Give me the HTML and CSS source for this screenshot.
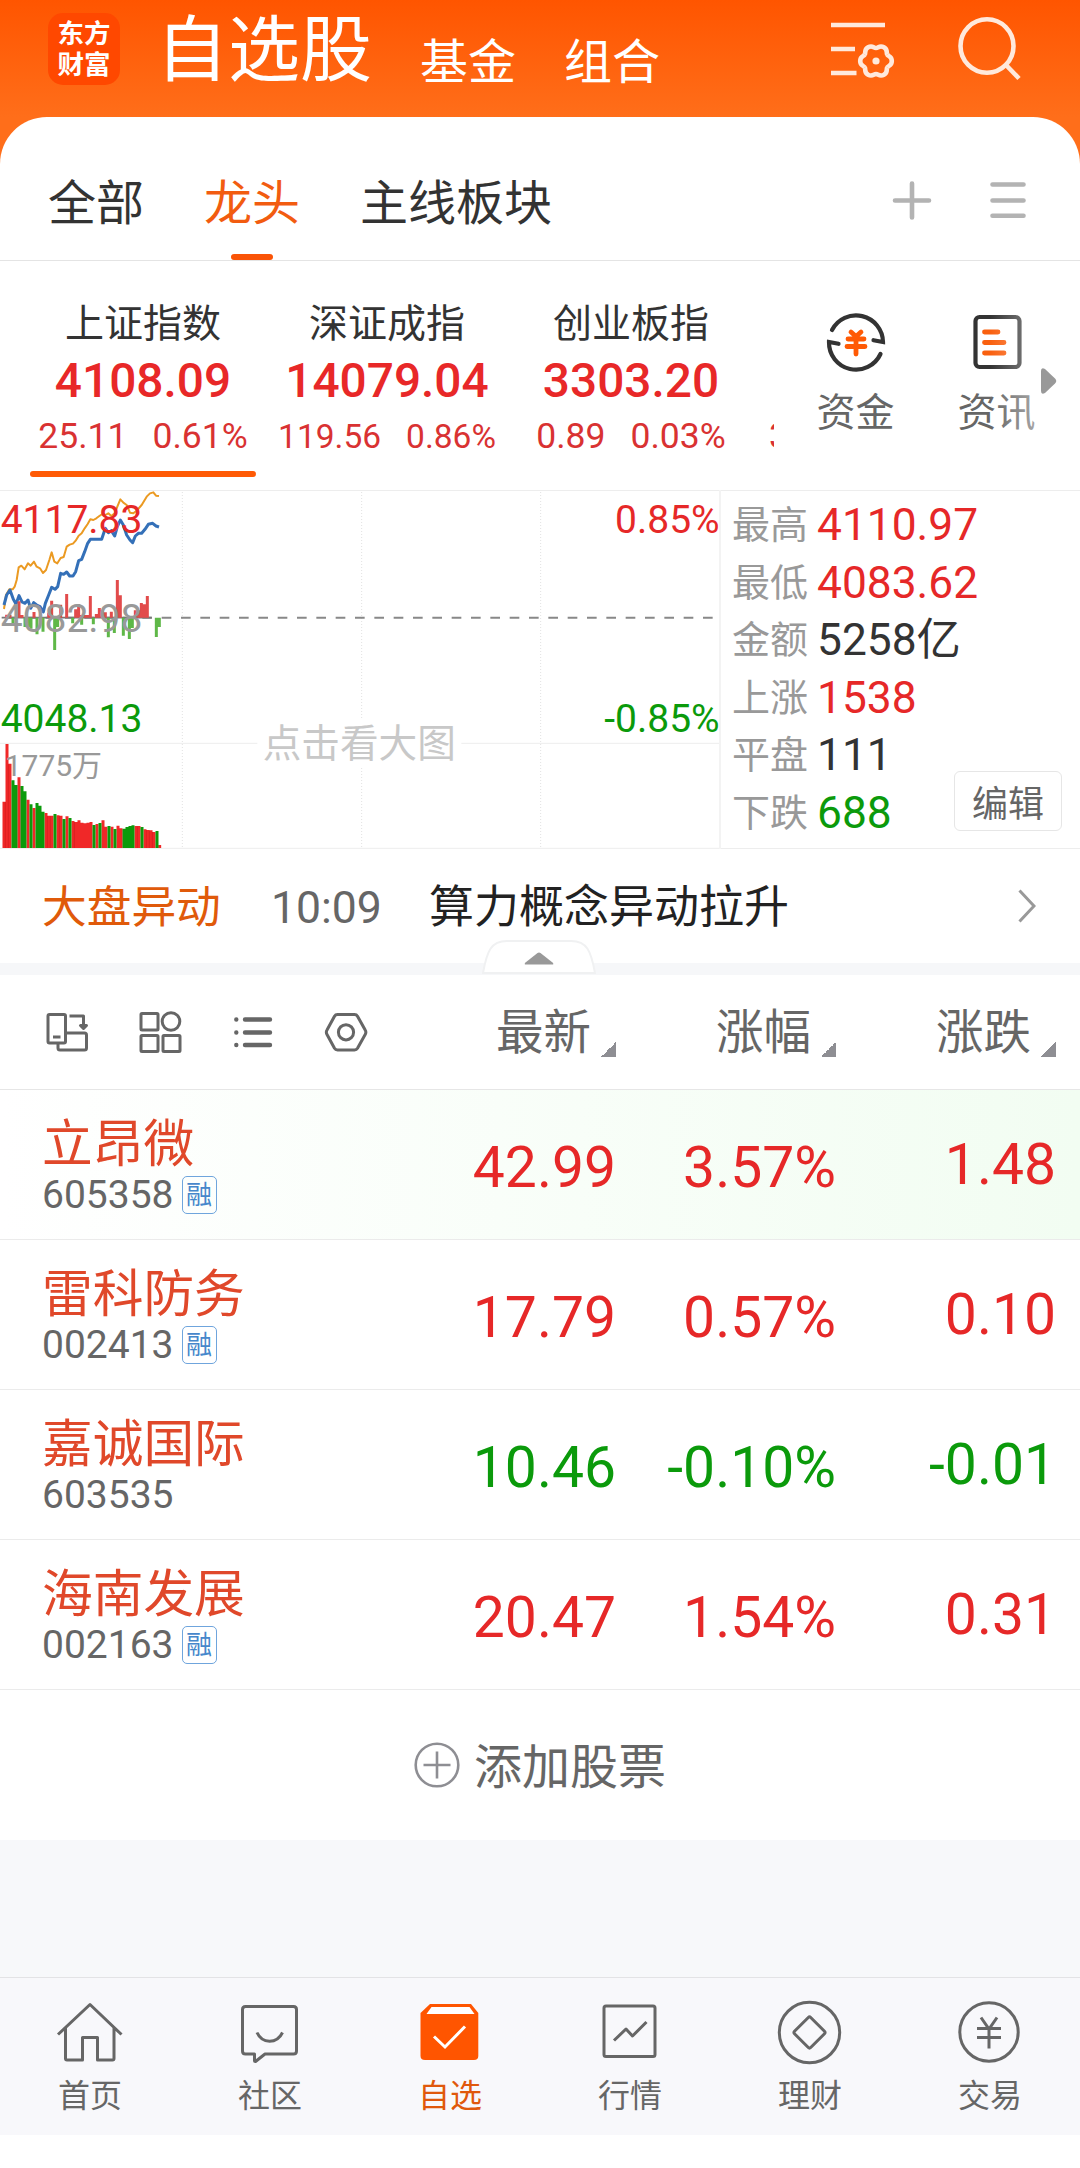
FILE: index.html
```html
<!DOCTYPE html>
<html lang="zh-CN">
<head>
<meta charset="utf-8">
<title>自选股</title>
<link rel="stylesheet" href="styles.css">
</head>
<body>
<header class="top">
  <div class="logo"><span>东方</span><span>财富</span></div>
  <nav class="top-nav">
    <span class="top-main">自选股</span>
    <span class="top-item">基金</span>
    <span class="top-item">组合</span>
  </nav>
  <svg class="top-icons" width="200" height="80" viewBox="824 10 200 80" fill="none" stroke="#ffe9dc" stroke-width="4.6">
    <path d="M831 25h54M831 49h24M831 73h25.500"/>
    <g transform="translate(876 61)">
      <path id="cog" d="M11.200-6.500C12.500-4.300 15.800-5 15.800 0S12.500 4.300 11.200 6.500"/>
      <use href="#cog" transform="rotate(60)"/><use href="#cog" transform="rotate(120)"/><use href="#cog" transform="rotate(180)"/><use href="#cog" transform="rotate(240)"/><use href="#cog" transform="rotate(300)"/>
      <circle r="3.600" fill="#ffe9dc" stroke="none"/>
    </g>
    <ellipse cx="987" cy="46" rx="26.500" ry="26.800"/><path d="M1006 65l13 13.500"/>
  </svg>
</header>

<main class="sheet">
  <div class="groups">
    <span class="group">全部</span>
    <span class="group active">龙头</span>
    <span class="group">主线板块</span>
    <svg class="group-tools" width="130" height="50" viewBox="900 175 130 50" fill="none" stroke="#b3b3b3" stroke-width="4.600" stroke-linecap="round">
      <path d="M895 200.500h34M912 183.500v34M992.500 184.500h31M992.500 200.500h31M992.500 215.800h31"/>
    </svg>
  </div>

  <section class="indices">
    <div class="index-strip">
      <div class="index current"><b>上证指数</b><strong>4108.09</strong><p><span>25.11</span><span>0.61%</span></p></div>
      <div class="index"><b>深证成指</b><strong>14079.04</strong><p class="compact"><span>119.56</span><span>0.86%</span></p></div>
      <div class="index"><b>创业板指</b><strong>3303.20</strong><p><span>0.89</span><span>0.03%</span></p></div>
      <div class="index next"><p><span>3</span></p></div>
    </div>
    <div class="shortcuts">
      <div class="shortcut">
        <svg width="64" height="64" viewBox="-32 -32 64 64" fill="none" stroke="#333" stroke-width="4.200" stroke-linecap="round">
          <path d="M-24-12A27 27 0 0 1 27 0L17.500-1.800M24.500 12A27 27 0 0 1-27 0L-17.500 1.800"/>
          <path stroke="#ff5a05" stroke-width="4.800" d="M-5-10L0-5.500L5-10M-8-3H8M-9 4.500H9M0-5V12"/>
        </svg>
        <span>资金</span>
      </div>
      <div class="shortcut">
        <svg width="64" height="64" viewBox="-32 -32 64 64" fill="none" stroke="#333" stroke-width="4.200" stroke-linecap="round">
          <rect x="-21.500" y="-25" width="44" height="50" rx="4"/>
          <path stroke="#f9600f" stroke-width="4.800" d="M-12.500-10H1M-12.500 .5H7M-12.500 11H7"/>
        </svg>
        <span>资讯</span>
      </div>
      <svg class="more" width="16" height="26" viewBox="0 0 16 26"><path d="M0 3Q0-1 4 1L14 10.500Q16.500 13 14 15.500L4 25Q0 27 0 23Z" fill="#999"/></svg>
    </div>
  </section>

  <section class="market">
    <svg class="chart" width="721" height="359" viewBox="0 30 2163 1077" fill="none">
      <g stroke="#ededed" stroke-width="3">
        <path d="M0 31.500H2163M0 790H2163M0 1105H2163"/>
        <path stroke="#e2e2e2" stroke-dasharray="3 6" d="M547 36V1104M1085 36V1104M1622 36V1104"/>
        <path stroke="#f3f3f3" stroke-width="6" d="M2160 30V1107"/>
      </g>
      <rect x="772" y="716" width="612" height="146" fill="#fff"/>
      <path d="M20 413H2140" stroke="#888" stroke-width="6" stroke-dasharray="29 29" stroke-dashoffset="-1"/>
      <path d="M5 413H455" stroke="#777" stroke-width="5"/>
      <polyline stroke="#eb9a22" stroke-width="6" stroke-linejoin="round" points="12,387 18,345 28,328 38,328 44,320 50,300 56,262 64,257 74,268 84,250 92,257 102,245 110,260 120,265 129,279 138,270 148,240 155,217 163,245 172,250 182,234 191,231 200,200 209,194 219,191 227,182 236,167 245,160 254,145 263,132 271,118 280,120 289,115 298,108 307,102 316,105 325,100 334,108 344,100 352,80 361,58 370,68 380,75 390,98 400,100 410,92 425,75 440,50 450,40 460,37 468,47 477,48"/>
      <polyline stroke="#3470b8" stroke-width="9" stroke-linejoin="round" points="12,375 20,345 30,330 40,358 48,372 57,347 66,366 75,370 84,360 92,385 101,368 110,375 120,380 130,396 136,370 146,345 155,322 165,328 173,320 182,280 191,283 200,276 209,288 219,288 227,275 236,242 245,238 254,215 263,190 271,178 285,178 305,178 316,145 325,158 334,152 344,168 352,140 361,120 370,135 380,165 390,180 398,188 406,168 415,160 425,160 435,148 445,133 458,130 468,138 477,141"/>
      <g stroke-width="9">
        <path stroke="#e24b4b" d="M20 413V404M30 413V404M57 413V364M66 413V405M102 413V396M146 413V398M155 413V362M182 413V374M200 413V342M227 413V388M236 413V373M245 413V405M254 413V405M263 413V405M271 413V348M289 413V402M298 413V384M307 413V390M316 413V397M334 413V395M352 413V300M361 413V346M406 413V391M415 413V391M424 413V369M433 413V373M442 413V348"/>
        <path stroke="#5fb848" d="M39 413V430M75 413V441M84 413V441M93 413V446M111 413V463M129 413V455M164 413V510M173 413V441M218 413V430M245 413V434M280 413V433M325 413V472M343 413V459M370 413V467M388 413V477M397 413V444M469 413V471M478 413V441"/>
        <path stroke="#f02828" d="M12 1104V965M21 1104V792M30 1104V851M57 1104V892M84 1104V959M102 1104V984M138 1104V999M147 1104V1007M156 1104V1007M174 1104V1006M183 1104V1007M201 1104V1009M219 1104V1023M228 1104V1026M237 1104V1021M246 1104V1028M255 1104V1030M264 1104V1028M273 1104V1026M291 1104V1032M309 1104V1021M318 1104V1040M336 1104V1040M354 1104V1037M363 1104V1045M408 1104V1038M417 1104V1038M435 1104V1048M444 1104V1050M453 1104V1051M462 1104V1056M479 1104V1095"/>
        <path stroke="#0b9a0b" d="M39 1104V901M48 1104V915M66 1104V918M75 1104V934M93 1104V973M111 1104V969M120 1104V977M129 1104V995M165 1104V1002M192 1104V1017M210 1104V1014M282 1104V1035M300 1104V1029M327 1104V1038M345 1104V1047M372 1104V1046M381 1104V1041M390 1104V1038M399 1104V1036M426 1104V1041M471 1104V1053"/>
        <path stroke="#800" stroke-opacity=".28" stroke-width="2" d="M16 1104V966M25 1104V853M52 1104V915M61 1104V918M142 1104V1008M151 1104V1008M178 1104V1008M223 1104V1026M367 1104V1047M412 1104V1040M439 1104V1050M448 1104V1052M457 1104V1056"/>
      </g>
      <g class="axis">
        <text class="up" x="2" y="158">4117.83</text>
        <text class="mid" x="2" y="455">4082.98</text>
        <text class="down" x="2" y="755">4048.13</text>
        <text class="up" x="2159" y="158" text-anchor="end">0.85%</text>
        <text class="down" x="2159" y="755" text-anchor="end">-0.85%</text>
        <text class="vol" x="14" y="887">1775万</text>
        <text class="hint" x="788" y="832">点击看大图</text>
      </g>
    </svg>
    <div class="stats">
      <dl>
        <div><dt>最高</dt><dd class="up">4110.97</dd></div>
        <div><dt>最低</dt><dd class="up">4083.62</dd></div>
        <div><dt>金额</dt><dd>5258亿</dd></div>
        <div><dt>上涨</dt><dd class="up">1538</dd></div>
        <div><dt>平盘</dt><dd>111</dd></div>
        <div><dt>下跌</dt><dd class="down">688</dd></div>
      </dl>
      <button class="edit">编辑</button>
    </div>
  </section>

  <section class="news">
    <span class="news-tag">大盘异动</span>
    <span class="news-time">10:09</span>
    <span class="news-title">算力概念异动拉升</span>
    <svg class="chevron" width="18" height="36" viewBox="0 0 18 36" fill="none" stroke="#999" stroke-width="3"><path d="M1.500 2.500L16 18L1.500 33.500"/></svg>
    <svg class="handle" width="114" height="36" viewBox="0 0 114 36">
      <path d="M1 34C5 12 9 2 25 2H89C105 2 109 12 113 34Z" fill="#fff" stroke="#f0f1f2" stroke-width="2"/>
      <path d="M44 25.500Q41.500 25.500 43.500 23.500L55.500 14Q57 13 58.500 14L70.500 23.500Q72.500 25.500 70 25.500Z" fill="#999"/>
    </svg>
  </section>

  <section class="list">
    <div class="list-head">
      <svg class="tools" width="330" height="60" viewBox="40 1002 330 60" fill="none" stroke="#666" stroke-width="3" stroke-linejoin="round">
        <rect x="48" y="1014.500" width="17.500" height="28.500" rx="1.500"/>
        <path d="M53 1037H60.500M66 1033H84.500Q86.500 1033 86.500 1035V1048Q86.500 1050 84.500 1050H60Q58 1050 58 1048V1044M69.500 1016H83.500V1027"/><path d="M80.500 1025.500H86.500L83.500 1028.500Z" fill="#666"/>
        <rect x="141" y="1013.500" width="17" height="16.500" rx="1"/><rect x="141" y="1035.500" width="17" height="16" rx="1"/><rect x="163" y="1035.500" width="17" height="16" rx="1"/><circle cx="171" cy="1021.500" r="8.800"/>
        <path stroke-width="4.400" stroke-linecap="round" d="M236.300 1019.500v.1M236.300 1032.500v.1M236.300 1045v.1M245 1019.500H270M245 1032.500H270M245 1045H270"/>
        <path d="M337.500 1014.500H354.500Q356.500 1014.500 357.500 1016.200L365.200 1030Q366.500 1032.200 365.200 1034.500L357.500 1048.300Q356.500 1050 354.500 1050H337.500Q335.500 1050 334.500 1048.300L327 1034.500Q325.700 1032.200 327 1030L334.500 1016.200Q335.500 1014.500 337.500 1014.500Z"/><circle cx="346" cy="1032.300" r="7.600"/>
      </svg>
      <span class="col">最新<i></i></span><span class="col">涨幅<i></i></span><span class="col">涨跌<i></i></span>
    </div>
    <div class="stock flash">
      <div class="who"><span class="name">立昂微</span><span class="code">605358<em>融</em></span></div>
      <span class="num up">42.99</span><span class="num up">3.57%</span><span class="num chg up">1.48</span>
    </div>
    <div class="stock">
      <div class="who"><span class="name">雷科防务</span><span class="code">002413<em>融</em></span></div>
      <span class="num up">17.79</span><span class="num up">0.57%</span><span class="num chg up">0.10</span>
    </div>
    <div class="stock">
      <div class="who"><span class="name">嘉诚国际</span><span class="code">603535</span></div>
      <span class="num down">10.46</span><span class="num down">-0.10%</span><span class="num chg down">-0.01</span>
    </div>
    <div class="stock">
      <div class="who"><span class="name">海南发展</span><span class="code">002163<em>融</em></span></div>
      <span class="num up">20.47</span><span class="num up">1.54%</span><span class="num chg up">0.31</span>
    </div>
    <div class="add">
      <svg width="46" height="46" viewBox="-23 -23 46 46" fill="none" stroke="#8e8e93" stroke-width="2.600"><circle r="21.300"/><path d="M-13.500 0H13.500M0-13.500V13.500"/></svg>
      <span>添加股票</span>
    </div>
  </section>
</main>

<nav class="tabbar">
  <div class="tab">
    <svg width="70" height="70" viewBox="55 1998 70 70" fill="none" stroke="#666" stroke-width="3" stroke-linejoin="round"><path d="M58 2034.500L90 2004.500L121.500 2034.500M65.500 2028V2058.500Q65.500 2060 67 2060H82.500V2037.500H97.500V2060H112.500Q114 2060 114 2058.500V2028"/></svg>
    <span>首页</span>
  </div>
  <div class="tab">
    <svg width="70" height="70" viewBox="235 1998 70 70" fill="none" stroke="#666" stroke-width="3" stroke-linejoin="round"><path d="M245.500 2006.500H293.500Q296.500 2006.500 296.500 2009.500V2051Q296.500 2054 293.500 2054H265L255.500 2061.500Q254.500 2061.500 254.500 2060.500V2054H245.500Q242.500 2054 242.500 2051V2009.500Q242.500 2006.500 245.500 2006.500Z"/><path d="M257 2032.500C262 2044 277 2044 282.500 2032.500"/></svg>
    <span>社区</span>
  </div>
  <div class="tab on">
    <svg width="70" height="70" viewBox="415 1998 70 70" fill="none"><path d="M430 2004H471L478.300 2013V2056Q478.300 2060 474 2060H425Q420.500 2060 420.500 2056V2013Z" fill="#ff5500"/><path d="M431.500 2007H469.500L474.500 2014H426.500Z" fill="#fff"/><path d="M434 2036.500L445 2047L465 2026.500" stroke="#fff" stroke-width="3"/></svg>
    <span>自选</span>
  </div>
  <div class="tab">
    <svg width="70" height="70" viewBox="595 1998 70 70" fill="none" stroke="#666" stroke-width="3" stroke-linejoin="round"><rect x="604" y="2006" width="51" height="50.500" rx="2"/><path d="M614 2040.500L626 2029L632.500 2036L646.500 2022"/></svg>
    <span>行情</span>
  </div>
  <div class="tab">
    <svg width="70" height="70" viewBox="775 1998 70 70" fill="none" stroke="#666" stroke-width="3" stroke-linejoin="round"><circle cx="809.500" cy="2032.500" r="30.200"/><path d="M808.300 2017.500Q809.500 2016.300 810.700 2017.500L824.500 2031.300Q825.700 2032.500 824.500 2033.700L810.700 2047.500Q809.500 2048.700 808.300 2047.500L794.500 2033.700Q793.300 2032.500 794.500 2031.300Z"/></svg>
    <span>理财</span>
  </div>
  <div class="tab">
    <svg width="70" height="70" viewBox="955 1998 70 70" fill="none" stroke="#666" stroke-width="3"><circle cx="989" cy="2032" r="29.200"/><path d="M981 2017.500L989 2029L997 2017.500M977 2028.500H1001M977 2037.500H1001M989 2028V2048.500"/></svg>
    <span>交易</span>
  </div>
</nav>
</body>
</html>
```
FILE: styles.css
```css
* { box-sizing: border-box; }
body {
  margin: 0;
  width: 1080px;
  height: 2168px;
  overflow: hidden;
  background: #fff;
  color: #333;
  font-family: Roboto, "Noto Sans CJK SC", sans-serif;
  font-weight: 400;
}
svg { display: block; flex: none; }
p, dl, dd { margin: 0; }
.up { color: #e62828; fill: #e62828; }
.down { color: #0b9a0b; fill: #0b9a0b; }

/* header */
.top {
  display: flex;
  height: 165px;
  padding: 10px 56px 0 48px;
  background: linear-gradient(#ff5500, #ff6e1a 117px);
}
.logo {
  display: flex;
  flex-direction: column;
  align-items: center;
  width: 72px;
  height: 72px;
  margin-top: 3px;
  padding-top: 5px;
  border-radius: 15px;
  background: #ff4800;
  color: #fff;
  font-size: 26.500px;
  font-weight: 700;
  line-height: 31px;
}
.top-nav {
  display: flex;
  flex: 1;
  height: 80px;
  margin-left: 36px;
  color: #fff;
  white-space: nowrap;
}
.top-main { width: 264px; font-size: 72px; line-height: 82px; }
.top-item { width: 144px; font-size: 48px; line-height: 105px; }

/* white sheet */
.sheet {
  margin-top: -48px;
  border-radius: 47px 47px 0 0;
  background: #fff;
}
.groups {
  display: flex;
  gap: 60px;
  height: 144px;
  padding: 0 50px 0 48px;
  border-bottom: 1px solid #e4e4e4;
  font-size: 48px;
  line-height: 174px;
}
.group { position: relative; height: 143px; white-space: nowrap; }
.active { color: #f25c10; }
.active::after {
  content: "";
  position: absolute;
  left: 27px;
  bottom: 0;
  width: 42px;
  height: 6px;
  border-radius: 3px;
  background: #fa5407;
}
.group-tools { margin: 58px 0 0 auto; overflow: visible; }

.indices { display: flex; height: 229px; }
.index-strip {
  display: flex;
  width: 774px;
  padding-left: 21px;
  overflow: hidden;
}
.index {
  display: flex;
  flex: none;
  flex-direction: column;
  align-items: center;
  width: 244px;
  padding-top: 37px;
}
.index b { font-size: 39px; font-weight: 400; line-height: 52px; }
.index strong { color: #e82828; font-size: 47.800px; font-weight: 500; line-height: 62px; }
.index p { display: flex; gap: 25px; color: #d93232; font-size: 35.500px; line-height: 49px; }
.index .compact { font-size: 33.500px; }
.index.current { position: relative; }
.index.current::after {
  content: "";
  position: absolute;
  left: 9px;
  top: 210px;
  width: 226px;
  height: 6px;
  border-radius: 3px;
  background: #ff5a05;
}
.index.next { align-items: flex-start; padding: 151px 0 0 16px; }
.shortcuts {
  position: relative;
  display: flex;
  flex: 1;
  padding-left: 11px;
}
.shortcut {
  display: flex;
  flex-direction: column;
  align-items: center;
  width: 141px;
  padding-top: 49px;
  color: #666;
  font-size: 39px;
}
.shortcut span { margin-top: 13px; line-height: 52px; }
.shortcuts::after {
  content: "";
  position: absolute;
  top: 40px;
  right: 40px;
  width: 50px;
  height: 140px;
  background: linear-gradient(90deg, rgba(255,255,255,0), rgba(255,255,255,.45));
}
.more { position: absolute; z-index: 1; left: 267px; top: 107px; }

/* chart and figures */
.market { display: flex; height: 359px; }
.axis text { font-size: 117px; }
.axis .mid { fill: #999; }
.axis .vol { fill: #999; font-size: 90px; }
.axis .hint { fill: #c8c8c8; font-size: 116px; }
.stats {
  position: relative;
  flex: 1;
  padding: 6px 0 0 11px;
  border-top: 1px solid #ededed;
  border-bottom: 1px solid #ededed;
}
.stats dl div { display: flex; height: 57.600px; line-height: 57.600px; }
.stats dt { width: 85px; color: #999; font-size: 38px; }
.stats dd { font-size: 44.300px; white-space: nowrap; }
.edit {
  position: absolute;
  right: 18px;
  bottom: 17px;
  width: 108px;
  height: 60px;
  padding: 0;
  border: 1px solid #e6e6e6;
  border-radius: 6px;
  background: #fff;
  color: #666;
  font: 36px Roboto, "Noto Sans CJK SC", sans-serif;
}

.news {
  position: relative;
  display: flex;
  align-items: center;
  height: 126px;
  padding: 0 44px 0 42px;
  border-bottom: 12px solid #f6f7f9;
  font-size: 45px;
  line-height: 60px;
  white-space: nowrap;
}
.news span { padding-top: 4px; }
.news-tag { width: 229px; color: #e05a0a; font-size: 44.700px; }
.news-time { width: 158px; color: #666; font-size: 44.500px; }
.news-title { color: #222; }
.chevron { margin-left: auto; }
.handle { position: absolute; left: 482px; top: 90px; }

/* watch list */
.list-head {
  display: flex;
  height: 115px;
  padding: 0 24px 0 40px;
  border-bottom: 1px solid #e6e6e6;
  color: #666;
  font-size: 47.500px;
  line-height: 116px;
}
.tools { margin: 27px 26px 0 0; }
.col { display: flex; flex: none; justify-content: flex-end; width: 220px; }
.col i {
  width: 15px;
  height: 15px;
  margin: 67px 0 0 10px;
  background: linear-gradient(135deg, transparent 50%, #8e8e93 50%);
}
.stock {
  display: flex;
  height: 150px;
  padding: 0 24px 0 42px;
  border-bottom: 1px solid #ebebeb;
}
.flash { background: linear-gradient(90deg, #fff, #f2fdf2); }
.who { display: flex; flex: none; flex-direction: column; width: 354px; padding-top: 27px; }
.name { color: #e0482a; font-size: 50.700px; line-height: 55px; }
.code { display: flex; align-items: center; height: 46px; color: #666; font-size: 39px; line-height: 46px; }
.code em {
  width: 35px;
  height: 38px;
  margin-left: 8px;
  border: 1.500px solid #6fa5dd;
  border-radius: 5px;
  color: #4687cb;
  font-size: 26px;
  font-style: normal;
  line-height: 36px;
  text-align: center;
}
.num { flex: none; width: 220px; font-size: 57px; line-height: 156px; text-align: right; }
.chg { line-height: 150px; }
.add {
  display: flex;
  align-items: center;
  justify-content: center;
  gap: 14px;
  height: 150px;
  padding-bottom: 1px;
  color: #666;
  font-size: 48px;
  line-height: 60px;
}
.add span { padding-top: 6px; }

/* bottom tabs */
.tabbar {
  display: flex;
  height: 295px;
  margin: 0;
  padding-top: 138px;
  background: linear-gradient(#f7f8fa 137px, #e3e3e5 137px 138px, #f8f8fb 138px);
}
.tab {
  display: flex;
  flex: 1;
  flex-direction: column;
  align-items: center;
  padding-top: 20px;
  color: #666;
  font-size: 32px;
}
.tab span { margin-top: 8px; line-height: 40px; }
.tab.on { color: #e0580c; }
```
